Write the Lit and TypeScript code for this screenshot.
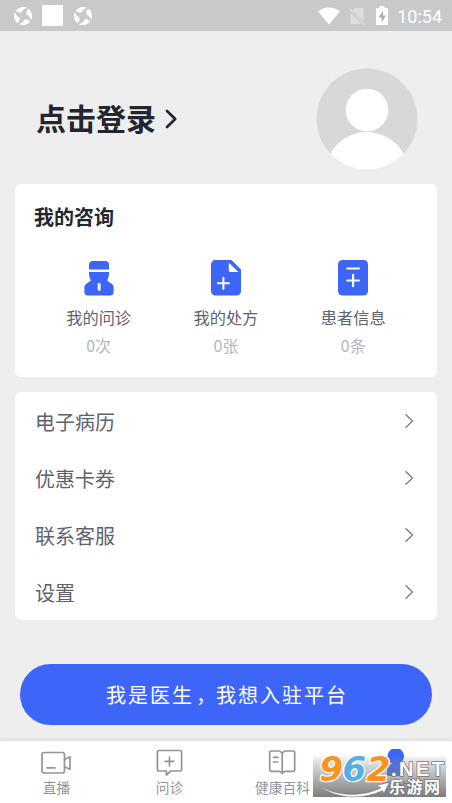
import { LitElement, html, css, svg } from "lit";
import { customElement } from "lit/decorators.js";

const swirl = html`<svg class="swirl" width="20" height="20" viewBox="0 0 20 20">
  <g fill="#fff">
    ${[0, 90, 180, 270].map(
      (a) => svg`<path transform="rotate(${a} 10 10)" d="M2.800 4.600C5.400 1 10.500 0 14.200 1.800C11.500 2.600 9.600 4.200 8.200 6.600C6.400 6.900 4.200 6.300 2.800 4.600Z"/>`
    )}
  </g>
</svg>`;

const consultIcon = svg`
  <path fill="#3d66f8" d="M5 9.600V4.500C5 2.200 6.500 1 8.800 1h12.400C23.500 1 25 2.200 25 4.500V9.600Z"/>
  <path fill="#3d66f8" d="M5 12h20v1.500c0 3-.8 5-2 7l5 3.400c1.100.8 1.600 1.700 1.600 3.100v5.300c0 2-1 3.200-3 3.200H3.400c-2 0-3-1.200-3-3.200v-5.300c0-1.400.5-2.300 1.600-3.100l5-3.400c-1.200-2-2-4-2-7Z"/>
  <rect x="13.700" y="23" width="2.900" height="7.800" rx="1.400" fill="#fff"/>`;
const recipeIcon = svg`
  <path fill="#3d66f8" d="M4.500 0H20.500L30 9.500V31a4.500 4.500 0 0 1-4.500 4.500H4.500A4.500 4.500 0 0 1 0 31V4.500A4.500 4.500 0 0 1 4.500 0Z"/>
  <path fill="#fff" d="M17.800 2.700 27.500 12H19.300a1.500 1.500 0 0 1-1.500-1.500Z"/>
  <path fill="none" stroke="#fff" stroke-width="2" stroke-linecap="round" d="M6.800 23.300H18M12.400 17.700V28.900"/>`;
const patientIcon = svg`
  <rect width="30" height="35.500" rx="4.500" fill="#3d66f8"/>
  <path fill="none" stroke="#fff" stroke-width="2.100" stroke-linecap="round" d="M9.200 8.500H21M9.200 20.500H21M15.100 14.700V26.300"/>`;

const liveTab = svg`
  <rect x="1" y="3.500" width="22.500" height="20.500" rx="2.200"/>
  <path d="M6 18.800h8M23.500 10.500l5.500-2.700v12.400l-5.500-2.500"/>`;
const askTab = svg`
  <path d="M5 1.500h21c1 0 1.600.6 1.600 1.600v17.300c0 1-.6 1.600-1.600 1.600H16.800l-4.400 4V22H5c-1 0-1.600-.6-1.600-1.600V3.100c0-1 .6-1.600 1.600-1.600Z"/>
  <path d="M15.500 8v8.800M11.100 12.400h8.800"/>`;
const bookTab = svg`
  <path d="M15.200 4.500C14.300 2.600 12.800 2 11 2H4.400C3.300 2 2.700 2.600 2.700 3.700v17c0 1 .6 1.600 1.700 1.600H12c1.600 0 2.600.7 3.200 2.200.6-1.500 1.600-2.200 3.200-2.200H26c1.100 0 1.700-.6 1.700-1.600v-17C27.700 2.600 27.100 2 26 2h-6.600c-1.800 0-3.300.6-4.200 2.500Zm0 0v20M6.500 8.300h4.300M6.500 13h4.300"/>`;

@customElement("app-root")
export class AppRoot extends LitElement {
  static styles = css`
    :host {
      display: flex;
      flex-direction: column;
      position: relative;
      height: 803px;
      overflow: hidden;
      background: #eeeeee;
      color: #5f626d;
      font-family: "Noto Sans CJK SC", sans-serif;
    }
    * { box-sizing: border-box; }
    svg { display: block; flex: none; }
    .status {
      height: 31px;
      background: #c8c9cb;
      display: flex;
      align-items: center;
      padding: 0 10px 0 13px;
      color: #fff;
      font: 400 18px/31px Roboto, sans-serif;
    }
    .blank { width: 21px; height: 21px; background: #fff; margin: 0 10px 0 9px; }
    .grow { flex: 1; }
    .wifi { margin-right: 9px; }
    .sim { margin-right: 11px; }
    .battery { margin-right: 9px; }
    .time { padding-top: 2px; }
    .profile {
      height: 153px;
      display: flex;
      align-items: center;
      padding: 22px 34px 0 36px;
    }
    .login { font-size: 30px; line-height: 44px; font-weight: 700; color: #23252f; margin-top: -4px; }
    .login-arrow { margin: 1px 0 0 8px; }
    .avatar { margin-left: auto; }
    .card { background: #fff; border-radius: 6px; margin: 0 15px 15px; }
    .consult { height: 193px; padding: 18px 20px 0 19px; }
    .title { font-size: 20px; line-height: 30px; font-weight: 700; color: #23252f; }
    .items { display: grid; grid-template-columns: repeat(3, 127.300px); margin: 28px 0 0 1px; }
    .item { display: flex; flex-direction: column; align-items: center; }
    .name { font-size: 16.200px; line-height: 24px; margin-top: 9px; }
    .count { font-size: 16px; line-height: 24px; margin-top: 4px; color: #b5b7bd; }
    .list { height: 228px; margin-bottom: 44px; }
    .row {
      height: 57px;
      padding: 1px 23px 0 20px;
      display: flex;
      align-items: center;
      justify-content: space-between;
      font-size: 20px;
    }
    .join {
      margin: 0 20px 15px;
      padding-left: 2px;
      height: 61px;
      border-radius: 31px;
      background: #3d66f8;
      color: #fff;
      text-align: center;
      font-size: 20px;
      line-height: 61px;
      letter-spacing: 2px;
      white-space: nowrap;
    }
    .comma { display: inline-block; width: 22px; line-height: 1; text-indent: 2px; letter-spacing: 0; }
    .tabs {
      flex: 1;
      background: #fff;
      border-top: 1px solid #e3e3e4;
      box-shadow: 0 -1px 2px #dedede;
      display: grid;
      grid-template-columns: repeat(4, 1fr);
      color: #92949f;
      font-size: 13.700px;
      line-height: 20px;
    }
    .tab { display: flex; flex-direction: column; align-items: center; padding-top: 8px; }
    .tab svg { fill: none; stroke: #92949f; stroke-width: 1.700; stroke-linejoin: round; stroke-linecap: round; }
    .tab .mine { fill: #3d66f8; stroke: none; }
    .active { color: #3d66f8; }
    .brand { position: absolute; left: 313px; top: 755px; overflow: visible; }
  `;

  private items = [
    { icon: consultIcon, name: "我的问诊", count: "0次" },
    { icon: recipeIcon, name: "我的处方", count: "0张" },
    { icon: patientIcon, name: "患者信息", count: "0条" },
  ];

  private rows = ["电子病历", "优惠卡券", "联系客服", "设置"];

  private tabs = [
    { icon: liveTab, name: "直播" },
    { icon: askTab, name: "问诊" },
    { icon: bookTab, name: "健康百科" },
  ];

  render() {
    return html`
      <div class="status">
        ${swirl}<span class="blank"></span>${swirl}
        <span class="grow"></span>
        <svg class="wifi" width="22" height="18" viewBox="0 0 22 18"><path fill="#fff" d="M0 4.300C6.500-.8 15.500-.8 22 4.300L11 17.500Z"/></svg>
        <svg class="sim" width="16" height="18" viewBox="0 0 16 18"><path fill="#dcddde" d="M5.500 1h9v13.500L3.800 3ZM1.500 5.200 12.500 17H1.500Z"/><path stroke="#dcddde" stroke-width="1.300" d="M.5 1.500l15 16"/></svg>
        <svg class="battery" width="12" height="19" viewBox="0 0 12 19"><path fill="#fff" d="M3.500 0h5v2H12v17H0V2h3.500Z"/><path fill="#aeb0b2" d="M7 4.500 2.500 11.500h3V16.500L10 9.500H7Z"/></svg>
        <span class="time">10:54</span>
      </div>

      <div class="profile">
        <span class="login">点击登录</span>
        <svg class="login-arrow" width="15" height="22" viewBox="0 0 15 22"><path d="M3 3l8.200 8L3 19" fill="none" stroke="#23252f" stroke-width="2.700" stroke-linecap="round" stroke-linejoin="round"/></svg>
        <svg class="avatar" width="102" height="102" viewBox="0 0 102 102">
          <defs><clipPath id="round"><circle cx="51" cy="51" r="50.500"/></clipPath></defs>
          <g clip-path="url(#round)">
            <rect width="102" height="102" fill="#d8d8d8"/>
            <circle cx="51" cy="42" r="21.300" fill="#fff"/>
            <circle cx="51" cy="106" r="42" fill="#fff"/>
          </g>
        </svg>
      </div>

      <section class="card consult">
        <div class="title">我的咨询</div>
        <div class="items">
          ${this.items.map(
            (i) => html`<div class="item">
              <svg width="30" height="36" viewBox="0 0 30 36">${i.icon}</svg>
              <span class="name">${i.name}</span>
              <span class="count">${i.count}</span>
            </div>`
          )}
        </div>
      </section>

      <section class="card list">
        ${this.rows.map(
          (r) => html`<div class="row">
            <span>${r}</span>
            <svg width="10" height="16" viewBox="0 0 10 16"><path d="M1.500 1.200 8.500 8 1.500 14.800" fill="none" stroke="#777a84" stroke-width="1.300"/></svg>
          </div>`
        )}
      </section>

      <div class="join">我是医生<span class="comma">，</span>我想入驻平台</div>

      <nav class="tabs">
        ${this.tabs.map(
          (t) => html`<div class="tab">
            <svg width="31" height="28" viewBox="0 0 31 28">${t.icon}</svg>
            <span>${t.name}</span>
          </div>`
        )}
        <div class="tab active">
          <svg class="mine" width="31" height="28" viewBox="0 0 31 28"><circle cx="15.800" cy="7.300" r="8.300"/><path d="M7 27V20c0-3 2-5 5-5h7c3 0 5 2 5 5v7Z"/></svg>
          <span>我的</span>
        </div>
      </nav>

      <svg class="brand" width="133" height="42" viewBox="0 0 133 42">
        <defs>
          <linearGradient id="shade" x1="0" y1="0" x2="0" y2="1">
            <stop offset="0" stop-color="#888" stop-opacity="0"/>
            <stop offset="0.150" stop-color="#888" stop-opacity="0.250"/>
            <stop offset="0.600" stop-color="#808080" stop-opacity="0.650"/>
            <stop offset="1" stop-color="#777" stop-opacity="0.960"/>
          </linearGradient>
        </defs>
        <rect width="133" height="42" fill="url(#shade)"/>
        <path d="M6 30C20 41 48 43 68 33L64 30.500 76 27.500 71 38 69.500 35.500C48 46 19 43 6 30Z" fill="#fff" stroke="#777" stroke-width="0.400"/>
        <g font-family="DejaVu Sans, sans-serif" font-weight="700" font-style="italic" font-size="33" stroke="#fff" stroke-width="2.500" paint-order="stroke" stroke-linejoin="round">
          <text x="6.500" y="26" fill="#f7931e" textLength="23.500" lengthAdjust="spacingAndGlyphs">9</text>
          <text x="29.500" y="26" fill="#55aee5" textLength="23.500" lengthAdjust="spacingAndGlyphs">6</text>
          <text x="53.500" y="26" fill="#f7931e" textLength="24" lengthAdjust="spacingAndGlyphs">2</text>
        </g>
        <g fill="#fff" stroke="#777" stroke-width="1.600" paint-order="stroke" font-weight="700">
          <text x="78" y="20.500" font-family="Liberation Sans, sans-serif" font-size="20" textLength="53">.NET</text>
          <text x="76" y="37.500" font-family="Noto Sans CJK SC, sans-serif" font-size="16" textLength="51">乐游网</text>
        </g>
      </svg>
    `;
  }
}
